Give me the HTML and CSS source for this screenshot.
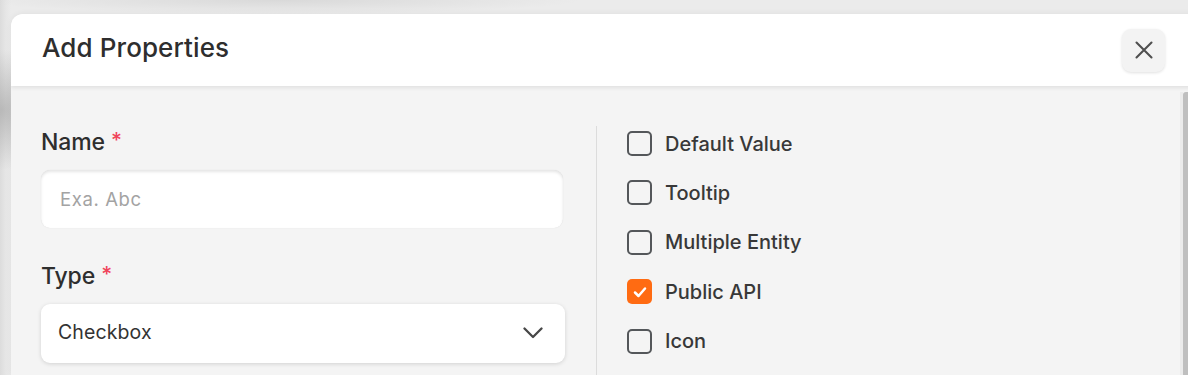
FILE: index.html
```html
<!DOCTYPE html>
<html>
<head>
<meta charset="utf-8">
<link rel="stylesheet" href="styles.css">
</head>
<body>
<div class="backdrop">
  <div class="modal">
    <div class="modal-header">
      <h1 class="title">Add Properties</h1>
      <button class="close-btn" aria-label="Close">
        <svg width="18" height="18" viewBox="0 0 18 18"><path d="M1.5 1.5 L16.5 16.5 M16.5 1.5 L1.5 16.5" stroke="#4f4f4f" stroke-width="2.1" stroke-linecap="round" fill="none"/></svg>
      </button>
    </div>
    <div class="modal-body">
      <div class="content">
        <div class="col-left">
          <div class="field">
            <label class="label">Name <span class="req">*</span></label>
            <div class="input"><span class="placeholder">Exa. Abc</span></div>
          </div>
          <div class="field">
            <label class="label">Type <span class="req">*</span></label>
            <div class="select">
              <span class="select-value">Checkbox</span>
              <svg class="chevron" width="20" height="12" viewBox="0 0 20 12"><path d="M1.5 1.5 L10 10 L18.5 1.5" stroke="#474747" stroke-width="2.3" stroke-linecap="round" stroke-linejoin="round" fill="none"/></svg>
            </div>
          </div>
        </div>
        <div class="divider"></div>
        <div class="col-right">
          <div class="check-row"><span class="box"></span><span class="check-label">Default Value</span></div>
          <div class="check-row"><span class="box"></span><span class="check-label">Tooltip</span></div>
          <div class="check-row"><span class="box"></span><span class="check-label">Multiple Entity</span></div>
          <div class="check-row"><span class="box checked"><svg width="14" height="12" viewBox="0 0 14 12"><path d="M2 6.5 L5.5 10 L12 2.5" stroke="#fff" stroke-width="2.5" stroke-linecap="round" stroke-linejoin="round" fill="none"/></svg></span><span class="check-label">Public API</span></div>
          <div class="check-row"><span class="box"></span><span class="check-label">Icon</span></div>
        </div>
      </div>
      <div class="scrollbar"><div class="thumb"></div></div>
    </div>
  </div>
</div>
</body>
</html>
```
FILE: styles.css
```css
* { box-sizing: border-box; }
html, body { margin: 0; padding: 0; }
body {
  width: 1188px;
  height: 375px;
  overflow: hidden;
  font-family: "Inter", "Lato", sans-serif;
  color: #333;
  background: linear-gradient(90deg, #dcdcdc 0px, #e6e6e6 6px, #ebebeb 11px);
}
.backdrop {
  padding: 14px 0 0 11px;
  height: 375px;
  background:
    radial-gradient(ellipse 60px 60px at 2px 110px, rgba(160,160,160,0.6), rgba(160,160,160,0) 100%),
    radial-gradient(ellipse 300px 14px at 280px 0px, rgba(215,215,215,0.9), rgba(215,215,215,0) 100%);
}
.modal {
  width: 1190px;
  height: 361px;
  border-radius: 12px 0 0 0;
  overflow: hidden;
  background: #f4f4f4;
  display: flex;
  flex-direction: column;
  box-shadow: 0 0 6px rgba(0,0,0,0.06);
}
.modal-header {
  height: 72px;
  flex: none;
  background: #fff;
  display: flex;
  align-items: center;
  justify-content: space-between;
  padding: 0 0 0 31px;
  box-shadow: 0 2px 4px rgba(0,0,0,0.08);
  position: relative;
  z-index: 1;
}
.title {
  margin: -6px 0 0 0;
  font-size: 26px;
  font-weight: 500;
  color: #2e2e2e;
  letter-spacing: 0.1px;
}
.close-btn {
  width: 43px;
  height: 43px;
  margin-right: 36px;
  border: none;
  border-radius: 9px;
  background: #f3f3f3;
  box-shadow: 0 1px 3px rgba(0,0,0,0.12);
  display: flex;
  align-items: center;
  justify-content: center;
  padding: 0;
}
.modal-body {
  flex: 1;
  display: flex;
}
.content {
  width: 1169px;
  display: flex;
  padding: 40px 0 0 30px;
}
.col-left {
  width: 524px;
  display: flex;
  flex-direction: column;
  gap: 33px;
  padding-top: 1px;
}
.field { display: flex; flex-direction: column; }
.label {
  font-size: 23px;
  font-weight: 500;
  color: #2e2e2e;
  line-height: 28px;
  margin-bottom: 14px;
  letter-spacing: -0.1px;
}
.req { color: #f0445a; font-size: 21px; vertical-align: 2px; }
.input {
  height: 58px;
  background: #fff;
  border-radius: 9px;
  box-shadow: inset 0 2px 3px rgba(0,0,0,0.10), 0 0 1px rgba(0,0,0,0.12);
  display: flex;
  align-items: center;
  padding-left: 19px;
  margin-right: 2px;
}
.placeholder { font-size: 18.5px; color: #a3a3a3; letter-spacing: 0.6px; }
.select {
  height: 59px;
  background: #fff;
  border-radius: 9px;
  box-shadow: 0 1px 4px rgba(0,0,0,0.14);
  display: flex;
  align-items: center;
  justify-content: space-between;
  padding: 0 22px 3px 17px;
}
.select-value { font-size: 19.5px; color: #333; letter-spacing: 0.1px; }
.chevron { margin-top: 2px; }
.divider {
  width: 1px;
  background: #dcdcdc;
  margin-left: 31px;
}
.col-right {
  display: flex;
  flex-direction: column;
  padding-left: 30px;
  padding-top: 5.5px;
  gap: 25.4px;
}
.check-row {
  display: flex;
  align-items: center;
  height: 24px;
}
.box {
  width: 25px;
  height: 25px;
  border: 2.5px solid #54575a;
  border-radius: 5px;
  margin-right: 13px;
  display: flex;
  align-items: center;
  justify-content: center;
  flex: none;
}
.box.checked {
  background: #ff6b12;
  border: none;
}
.check-label {
  font-size: 20px;
  font-weight: 500;
  color: #383838;
}
.scrollbar {
  width: 9px;
  margin-top: 6px;
  background: linear-gradient(90deg, #ebebeb 0 3px, transparent 3px);
  display: flex;
}
.thumb {
  margin-left: 3px;
  width: 6px;
  height: 100%;
  background: #bfbfbf;
  border-radius: 3px 0 0 0;
}
```
